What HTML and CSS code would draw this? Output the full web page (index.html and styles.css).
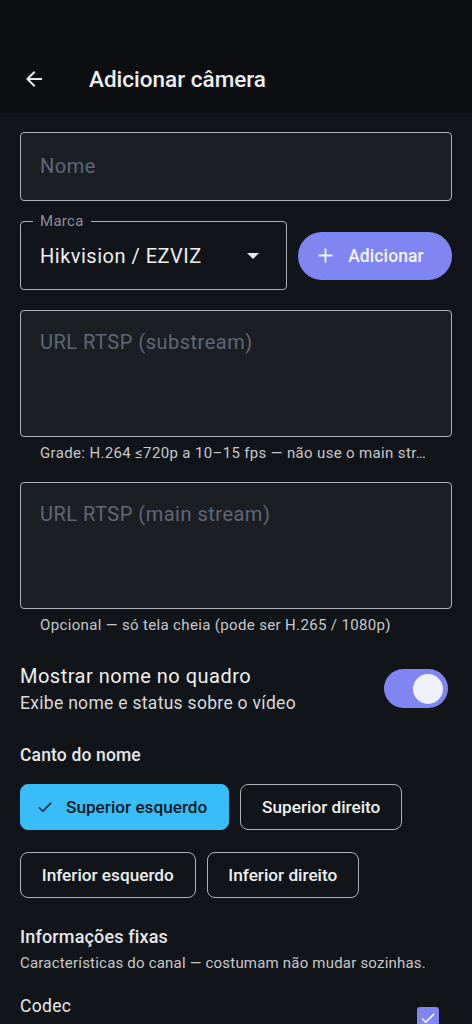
FILE: index.html
```html
<!DOCTYPE html>
<html lang="pt">
<head>
<meta charset="utf-8">
<link rel="stylesheet" href="styles.css">
</head>
<body>
<header class="appbar">
  <svg class="back" width="24" height="24" viewBox="0 0 24 24"><path d="M20 11H7.83l5.59-5.59L12 4l-8 8 8 8 1.41-1.41L7.83 13H20v-2z" fill="#e8eaed"/></svg>
  <h1 class="title">Adicionar câmera</h1>
</header>
<main class="content">
  <div class="field filled"><span class="ph">Nome</span></div>

  <div class="brand-row">
    <div class="field outline select">
      <span class="float-label">Marca</span>
      <span class="value">Hikvision / EZVIZ</span>
      <svg class="caret" width="12" height="6" viewBox="0 0 12 6"><path d="M0 0h12L6 6z" fill="#e8eaed"/></svg>
    </div>
    <button class="add-btn"><svg width="15" height="15" viewBox="0 0 15 15"><path d="M7.5 0.5v14M0.5 7.5h14" stroke="#f3f4ff" stroke-width="1.8"/></svg><span>Adicionar</span></button>
  </div>

  <div class="field filled tall"><span class="ph">URL RTSP (substream)</span></div>
  <p class="helper">Grade: H.264 ≤720p a 10–15 fps — não use o main str…</p>

  <div class="field filled tall"><span class="ph">URL RTSP (main stream)</span></div>
  <p class="helper">Opcional — só tela cheia (pode ser H.265 / 1080p)</p>

  <div class="switch-row">
    <div class="switch-text">
      <div class="switch-title">Mostrar nome no quadro</div>
      <div class="switch-sub">Exibe nome e status sobre o vídeo</div>
    </div>
    <div class="switch"><div class="thumb"></div></div>
  </div>

  <h2 class="section">Canto do nome</h2>
  <div class="chips">
    <span class="chip selected"><svg width="18" height="18" viewBox="0 0 24 24"><path d="M9 16.17L4.83 12l-1.42 1.41L9 19 21 7l-1.41-1.41z" fill="#0b1a24"/></svg>Superior esquerdo</span>
    <span class="chip">Superior direito</span>
    <span class="chip">Inferior esquerdo</span>
    <span class="chip">Inferior direito</span>
  </div>

  <h2 class="section fixed">Informações fixas</h2>
  <p class="section-sub">Características do canal — costumam não mudar sozinhas.</p>

  <div class="check-row">
    <span class="check-label">Codec</span>
    <span class="checkbox"><svg width="18" height="18" viewBox="0 0 24 24"><path d="M9 16.17L4.83 12l-1.42 1.41L9 19 21 7l-1.41-1.41z" fill="#ffffff"/></svg></span>
  </div>
</main>
</body>
</html>
```
FILE: styles.css
```css
* { box-sizing: border-box; }
html, body { margin: 0; padding: 0; }
body {
  background: #111418;
  color: #e6e8eb;
  font-family: Roboto, "Noto Sans", sans-serif;
  width: 472px;
  overflow: hidden;
}
.appbar {
  background: #0c0e11;
  height: 113px;
  padding: 44px 0 0 22px;
  display: flex;
  align-items: center;
}
.back { width: 24px; height: 24px; }
.title {
  margin: 0 0 0 43px;
  font-size: 22.5px;
  font-weight: 500;
  color: #eef0f2;
  letter-spacing: 0;
}
.content {
  padding: 19px 20px 0 20px;
}
.field {
  position: relative;
  border: 1.5px solid #aeb2b8;
  border-radius: 4px;
  height: 69px;
  display: flex;
  align-items: center;
  padding: 0 19px;
}
.field.filled { background: #1b1f24; }
.field.tall { height: 127px; align-items: flex-start; padding-top: 20px; }
.ph {
  color: #5d6878;
  font-size: 20px;
  letter-spacing: 0.5px;
  line-height: 23px;
}
.brand-row {
  display: flex;
  align-items: center;
  gap: 11px;
  margin-top: 20px;
}
.select {
  width: 267px;
  flex: none;
  background: #111418;
}
.float-label {
  position: absolute;
  left: 12px;
  top: -10px;
  padding: 0 7px;
  background: #111418;
  color: #8c939c;
  font-size: 15px;
  letter-spacing: 0.3px;
  line-height: 18px;
}
.value { font-size: 20px; color: #eef0f2; letter-spacing: 0.5px; }
.caret { margin-left: auto; margin-right: 8px; }
.add-btn {
  flex: 1;
  height: 48px;
  border: none;
  border-radius: 24px;
  background: #7f86f1;
  color: #f3f4ff;
  font-family: inherit;
  font-size: 17.5px;
  font-weight: 500;
  letter-spacing: 0.1px;
  display: flex;
  align-items: center;
  justify-content: center;
  gap: 15px;
  padding: 0 8px 0 0;
}
.helper {
  margin: 7px 0 0 20px;
  font-size: 15px;
  letter-spacing: 0.35px;
  color: #c6c9cd;
  white-space: nowrap;
  line-height: 18px;
}
.helper + .field { margin-top: 20px; }
.brand-row + .field { margin-top: 20px; }
.switch-row {
  display: flex;
  align-items: center;
  margin-top: 29px;
}
.switch-text { flex: 1; }
.switch-title { font-size: 20px; letter-spacing: 0.5px; color: #eef0f2; line-height: 26px; }
.switch-sub { font-size: 17.5px; letter-spacing: 0.3px; color: #d8dbde; line-height: 22px; margin-top: 3px; }
.switch {
  width: 64px;
  height: 39px;
  border-radius: 20px;
  background: #7f86f1;
  position: relative;
  margin-right: 4px;
}
.thumb {
  position: absolute;
  right: 5px;
  top: 4.5px;
  width: 30px;
  height: 30px;
  border-radius: 50%;
  background: #eef1fc;
}
.section {
  margin: 30px 0 0 0;
  font-size: 17.5px;
  font-weight: 500;
  letter-spacing: 0.15px;
  color: #e6e8eb;
  line-height: 22px;
}
.chips {
  display: flex;
  flex-wrap: wrap;
  column-gap: 11px;
  row-gap: 22px;
  margin-top: 18px;
  width: 400px;
}
.chip {
  height: 46px;
  border: 1.5px solid #aeb2b8;
  border-radius: 8px;
  display: inline-flex;
  align-items: center;
  padding: 0 20.8px;
  font-size: 17.2px;
  font-weight: 500;
  letter-spacing: 0;
  color: #eef0f2;
}
.chip.selected {
  background: #38bdf8;
  border-color: #38bdf8;
  color: #0b1a24;
  padding: 0 21px 0 15px;
  gap: 12px;
}
.section.fixed { margin-top: 27px; font-size: 18px; line-height: 24px; }
.section-sub {
  margin: 5px 0 0 0;
  font-size: 15px;
  letter-spacing: 0.2px;
  color: #c6c9cd;
  line-height: 18px;
}
.check-row {
  display: flex;
  align-items: flex-start;
  margin-top: 23px;
}
.check-label { flex: 1; font-size: 17.5px; letter-spacing: 0.3px; color: #e6e8eb; line-height: 22px; }
.checkbox {
  width: 22px;
  height: 22px;
  border-radius: 3px;
  background: #7f86f1;
  margin: 12px 13px 0 0;
  display: flex;
  align-items: center;
  justify-content: center;
}
```
